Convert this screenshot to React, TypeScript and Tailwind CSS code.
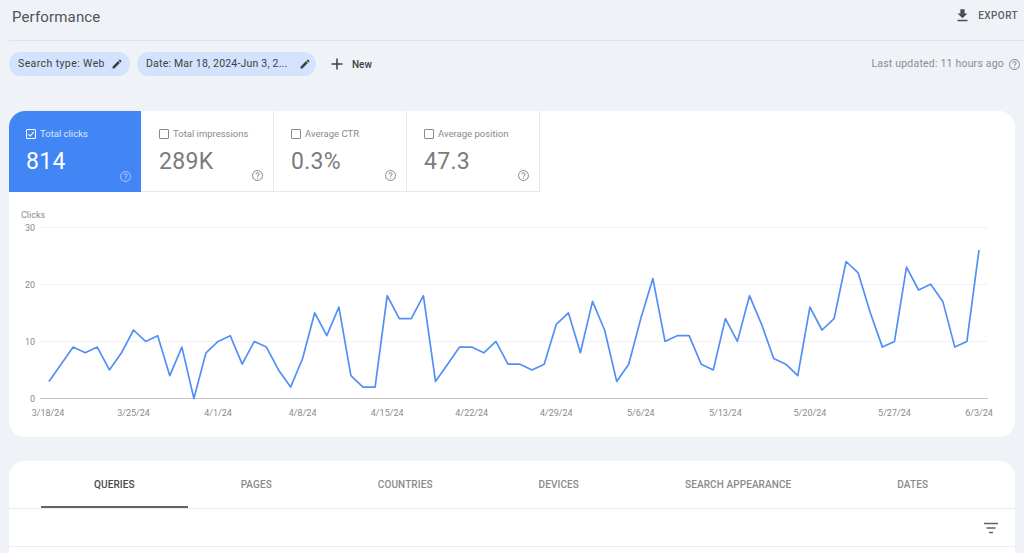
import React from "react";

const values = [3,6,9,8,9,5,8,12,10,11,4,9,0,8,10,11,6,10,9,5,2,7,15,11,16,4,2,2,18,14,14,18,3,6,9,9,8,10,6,6,5,6,13,15,8,17,12,3,6,14,21,10,11,11,6,5,14,10,18,13,7,6,4,16,12,14,24,22,15,9,10,23,19,20,17,9,10,26];
const X0 = 40;
const STEP = 930 / 77;
const Y0 = 206.5;
const UNIT = 5.71;
const points = values.map((v, i) => `${(X0 + i * STEP).toFixed(1)},${(Y0 - v * UNIT).toFixed(1)}`).join(" ");
const dates = ["3/18/24","3/25/24","4/1/24","4/8/24","4/15/24","4/22/24","4/29/24","5/6/24","5/13/24","5/20/24","5/27/24","6/3/24"];

function Help({ className, size = 13 }: { className: string; size?: number }) {
  return (
    <svg width={size} height={size} viewBox="0 0 24 24" className={className} fill="currentColor">
      <path d="M12 2a10 10 0 1 0 0 20 10 10 0 0 0 0-20Zm0 18.2a8.2 8.2 0 1 1 0-16.4 8.2 8.2 0 0 1 0 16.4Z" />
      <path d="M11.1 16h1.9v1.9h-1.9V16Zm1-10c-2.1 0-3.8 1.6-3.8 3.7h1.9c0-1 .9-1.9 1.9-1.9s1.9.9 1.9 1.9c0 1.9-2.9 1.7-2.9 4.8h1.9c0-2.1 2.9-2.4 2.9-4.8C15.9 7.6 14.200 6 12.100 6Z" />
    </svg>
  );
}

function Pencil() {
  return (
    <svg width="12" height="12" viewBox="0 0 24 24" fill="#3c4043" className="shrink-0 -mt-[1px]">
      <path d="M3 17.25V21h3.750L17.810 9.940l-3.750-3.750L3 17.250ZM20.710 7.040a1 1 0 0 0 0-1.410l-2.340-2.340a1 1 0 0 0-1.410 0l-1.830 1.830 3.750 3.750 1.830-1.830Z" />
    </svg>
  );
}

function Metric({ label, value, active, tight }: { label: string; value: string; active?: boolean; tight?: boolean }) {
  return (
    <div className={active
      ? "relative h-[81px] w-[132px] bg-[#4285f4] text-white rounded-tl-[16px] pl-[17px] pt-[17px]"
      : tight
        ? "relative h-[81px] w-[133px] bg-white text-[#7b7b7b] border-r border-b border-[#e6e8eb] pl-[17px] pt-[17px]"
        : "relative h-[81px] w-[133px] bg-white text-[#7b7b7b] border-r border-b border-[#e6e8eb] pl-[18px] pt-[17px]"}>
      <div className="flex items-center gap-[4px] h-[12px]">
        <span className={active
          ? "w-[10px] h-[10px] border border-white rounded-[1px] flex items-center justify-center"
          : "w-[10px] h-[10px] border border-[#8a8a8a] rounded-[1px]"}>
          {active && (
            <svg width="8" height="8" viewBox="0 0 10 10" fill="none" stroke="white" strokeWidth="1.300">
              <path d="M1.500 5.200 4 7.600 8.600 2.400" />
            </svg>
          )}
        </span>
        <span className={active ? "text-[9.500px] leading-[12px] text-[#dbe7fd]" : "text-[9.500px] leading-[12px] text-[#8a8a8a]"}>{label}</span>
      </div>
      <div className="text-[23px] leading-[28px] mt-[8px] tracking-[0.3px]">{value}</div>
      <Help className={active ? "absolute right-[9px] bottom-[9px] text-[#a9c6fa]" : "absolute right-[9px] bottom-[9px] text-[#8f8f8f]"} size={13} />
    </div>
  );
}

function Tab({ label, active }: { label: string; active?: boolean }) {
  return (
    <div className={active
      ? "h-[47px] px-[53px] pt-[18px] text-[10px] leading-[12px] font-medium tracking-[0.1px] text-[#4a4a4a] border-b-2 border-[#5f6368]"
      : "h-[47px] px-[53px] pt-[18px] text-[10px] leading-[12px] font-medium tracking-[0.1px] text-[#8a8a8a]"}>
      {label}
    </div>
  );
}

export default function App() {
  return (
    <div className="h-[553px] w-[1024px] overflow-hidden bg-[#eff3f8] font-['Roboto',sans-serif]">
      <header className="h-[41px] ml-[9px] border-b border-[#e0e3e7] flex items-center justify-between pr-[6px]">
        <h1 className="text-[15px] font-normal text-[#505357] pl-[3px] tracking-[0.15px] -mt-[6px]">Performance</h1>
        <div className="flex items-center gap-[7px] -mt-[9px]">
          <svg width="17" height="17" viewBox="0 0 24 24" fill="#4a4c50">
            <path d="M19 9h-4V3H9v6H5l7 7 7-7ZM5 18v2h14v-2H5Z" />
          </svg>
          <span className="text-[10px] font-medium tracking-[0.4px] text-[#5b5e62]">EXPORT</span>
        </div>
      </header>

      <div className="h-[70px] ml-[9px] mr-[3px] pt-[11px] flex items-start justify-between">
        <div className="flex items-center gap-[7px]">
          <div className="h-[24px] w-[121px] rounded-full bg-[#d3e3fd] flex items-center justify-between pl-[9px] pr-[7px]">
            <span className="text-[10.500px] text-[#3c4043] tracking-[0.4px] whitespace-nowrap">Search type: Web</span>
            <Pencil />
          </div>
          <div className="h-[24px] w-[179px] rounded-full bg-[#d3e3fd] flex items-center justify-between pl-[9px] pr-[5px]">
            <span className="text-[10.500px] text-[#3c4043] tracking-[0.2px] whitespace-nowrap">Date: Mar 18, 2024-Jun 3, 2...</span>
            <Pencil />
          </div>
          <div className="flex items-center ml-[7px] gap-[8px]">
            <svg width="14" height="14" viewBox="0 0 14 14" stroke="#3c4043" strokeWidth="1.500">
              <path d="M7 1.500v11M1.500 7h11" />
            </svg>
            <span className="text-[10px] font-medium text-[#3c4043]">New</span>
          </div>
        </div>
        <div className="flex items-center gap-[4px] h-[24px] text-[#8a8d91]">
          <span className="text-[10.500px] tracking-[0.2px]">Last updated: 11 hours ago</span>
          <Help className="text-[#8a8d91]" size={13} />
        </div>
      </div>

      <section className="mx-[9px] h-[326px] w-[1006px] bg-white rounded-[16px]">
        <div className="flex">
          <Metric label="Total clicks" value="814" active />
          <Metric label="Total impressions" value="289K" />
          <Metric label="Average CTR" value="0.3%" tight />
          <Metric label="Average position" value="47.3" tight />
        </div>
        <svg width="1006" height="245" viewBox="0 0 1006 245" className="block" fontFamily="Roboto, sans-serif" fontSize="9" fill="#8a8a8a">
          <text x="12" y="25.500">Clicks</text>
          {[30, 20, 10].map((v, i) => (
            <g key={v}>
              <line x1="31" x2="979" y1={35.500 + i * 57} y2={35.500 + i * 57} stroke="#f1f2f3" />
              <text x="26" y={38.800 + i * 57} textAnchor="end">{v}</text>
            </g>
          ))}
          <line x1="31" x2="979" y1="206.500" y2="206.500" stroke="#c4c6c9" />
          <text x="26" y="209.800" textAnchor="end">0</text>
          <polyline points={points} fill="none" stroke="#528ff6" strokeWidth="1.700" strokeLinejoin="round" />
          {dates.map((d, i) => (
            <text key={d} x={X0 + i * 7 * STEP - (i === 0 ? 1 : 0)} y="224" textAnchor="middle">{d}</text>
          ))}
        </svg>
      </section>

      <section className="mx-[9px] mt-[24px] h-[120px] w-[1006px] bg-white rounded-t-[16px]">
        <div className="h-[48px] border-b border-[#e8eaed] flex pl-[32px]">
          <Tab label="QUERIES" active />
          <Tab label="PAGES" />
          <Tab label="COUNTRIES" />
          <Tab label="DEVICES" />
          <Tab label="SEARCH APPEARANCE" />
          <Tab label="DATES" />
        </div>
        <div className="h-[38px] border-b border-[#eceef0] flex items-center justify-end pr-[16px]">
          <svg width="16" height="16" viewBox="0 0 16 16" stroke="#5f6368" strokeWidth="1.400" className="block">
            <path d="M1 3.500h14M3.500 8h9M6 12.500h4" />
          </svg>
        </div>
      </section>
    </div>
  );
}
